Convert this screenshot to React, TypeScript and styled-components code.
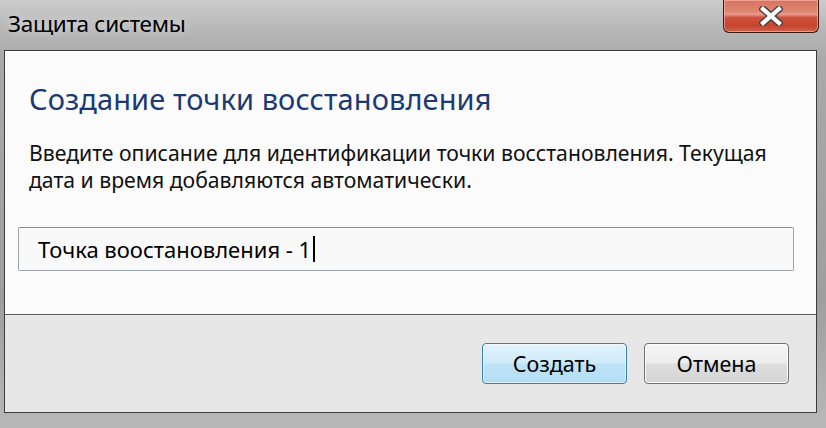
import React from "react";
import styled, { createGlobalStyle } from "styled-components";

const Global = createGlobalStyle`
  html, body { margin: 0; padding: 0; }
  body { width: 826px; height: 428px; overflow: hidden; }
  #root { width: 826px; height: 428px; }
`;

const Frame = styled.div`
  width: 826px;
  height: 428px;
  box-sizing: border-box;
  display: flex;
  flex-direction: column;
  padding: 0 9px 15px 4px;
  background:
    linear-gradient(180deg, #cbcbcb 0px, #b6b6b6 30px, #a9a9a9 60px, #9e9e9e 300px, #b8b8b8 428px);
  font-family: "Noto Sans", "Open Sans", sans-serif;
`;

const TitleBar = styled.div`
  height: 50px;
  display: flex;
  align-items: flex-start;
  justify-content: space-between;
  flex-shrink: 0;
`;

const Title = styled.div`
  margin: 8px 0 0 4px;
  font-size: 22.5px;
  color: #000;
  letter-spacing: -0.3px;
  text-shadow: 0 0 8px rgba(255, 255, 255, 0.7);
`;

const Close = styled.div`
  width: 96px;
  height: 33px;
  margin-right: -2px;
  box-sizing: border-box;
  border: 1px solid #3a1a14;
  border-top: none;
  border-radius: 0 0 6px 6px;
  background: linear-gradient(180deg, #d9735f 0%, #de8571 35%, #e9988a 45%, #cf503c 55%, #c6452f 80%, #d0634e 100%);
  box-shadow: inset 0 0 0 1px rgba(255, 190, 180, 0.6);
  display: flex;
  align-items: center;
  justify-content: center;
`;

const Client = styled.div`
  flex: 1;
  display: flex;
  flex-direction: column;
  border: 1px solid #3c3c3c;
  background: #fbfbfb;
`;

const Body = styled.div`
  flex: 1;
  display: flex;
  flex-direction: column;
  padding: 30px 22px 0 13px;
`;

const Heading = styled.h1`
  margin: 0 0 0 11px;
  font-weight: 400;
  font-size: 29px;
  line-height: 36px;
  color: #1c3a72;
  letter-spacing: 0.1px;
`;

const Desc = styled.p`
  margin: 22px 0 0 11px;
  font-size: 21.2px;
  line-height: 27px;
  color: #111;
  white-space: nowrap;
`;

const Input = styled.div`
  margin-top: 34px;
  height: 44px;
  box-sizing: border-box;
  border: 1px solid #9fa4aa;
  border-top-color: #8a8f95;
  border-radius: 2px;
  background: #f9f9f9;
  display: flex;
  align-items: center;
  padding-left: 19px;
  font-size: 22px;
  color: #000;
  letter-spacing: 0;
`;

const Caret = styled.span`
  display: inline-block;
  width: 1.5px;
  height: 26px;
  background: #000;
  margin-left: 2px;
`;

const Footer = styled.div`
  height: 98px;
  border-top: 1px solid #5a5a5a;
  background: #e8e7e7;
  display: flex;
  justify-content: flex-end;
  align-items: flex-start;
  gap: 17px;
  padding: 28px 27px 0 0;
  box-sizing: border-box;
`;

const Button = styled.div<{ $primary?: boolean }>`
  width: 145px;
  height: 41px;
  box-sizing: border-box;
  border-radius: 4px;
  border: 1px solid ${(p) => (p.$primary ? "#3c7fb1" : "#707070")};
  background: ${(p) =>
    p.$primary
      ? "linear-gradient(180deg, #e3f3fc 0%, #cfebf9 48%, #bde3f7 52%, #b4def5 100%)"
      : "linear-gradient(180deg, #f6f6f6 0%, #ececec 48%, #dedede 52%, #d4d4d4 100%)"};
  box-shadow: inset 0 0 0 1px ${(p) => (p.$primary ? "rgba(255,255,255,0.5)" : "#fcfcfc")};
  display: flex;
  align-items: center;
  justify-content: center;
  font-size: 21.5px;
  color: #000;
`;

export default function App() {
  return (
    <>
      <Global />
      <Frame>
        <TitleBar>
          <Title>Защита системы</Title>
          <Close>
            <svg width="24" height="20" viewBox="0 0 24 20">
              <path
                d="M4 3 L20 17 M20 3 L4 17"
                stroke="#4e4040"
                strokeWidth="7"
                strokeLinecap="square"
              />
              <path
                d="M4 3 L20 17 M20 3 L4 17"
                stroke="#ffffff"
                strokeWidth="4.2"
                strokeLinecap="square"
              />
            </svg>
          </Close>
        </TitleBar>
        <Client>
          <Body>
            <Heading>Создание точки восстановления</Heading>
            <Desc>
              Введите описание для идентификации точки восстановления. Текущая
              <br />
              дата и время добавляются автоматически.
            </Desc>
            <Input>
              Точка воостановления - 1<Caret />
            </Input>
          </Body>
          <Footer>
            <Button $primary>Создать</Button>
            <Button>Отмена</Button>
          </Footer>
        </Client>
      </Frame>
    </>
  );
}
